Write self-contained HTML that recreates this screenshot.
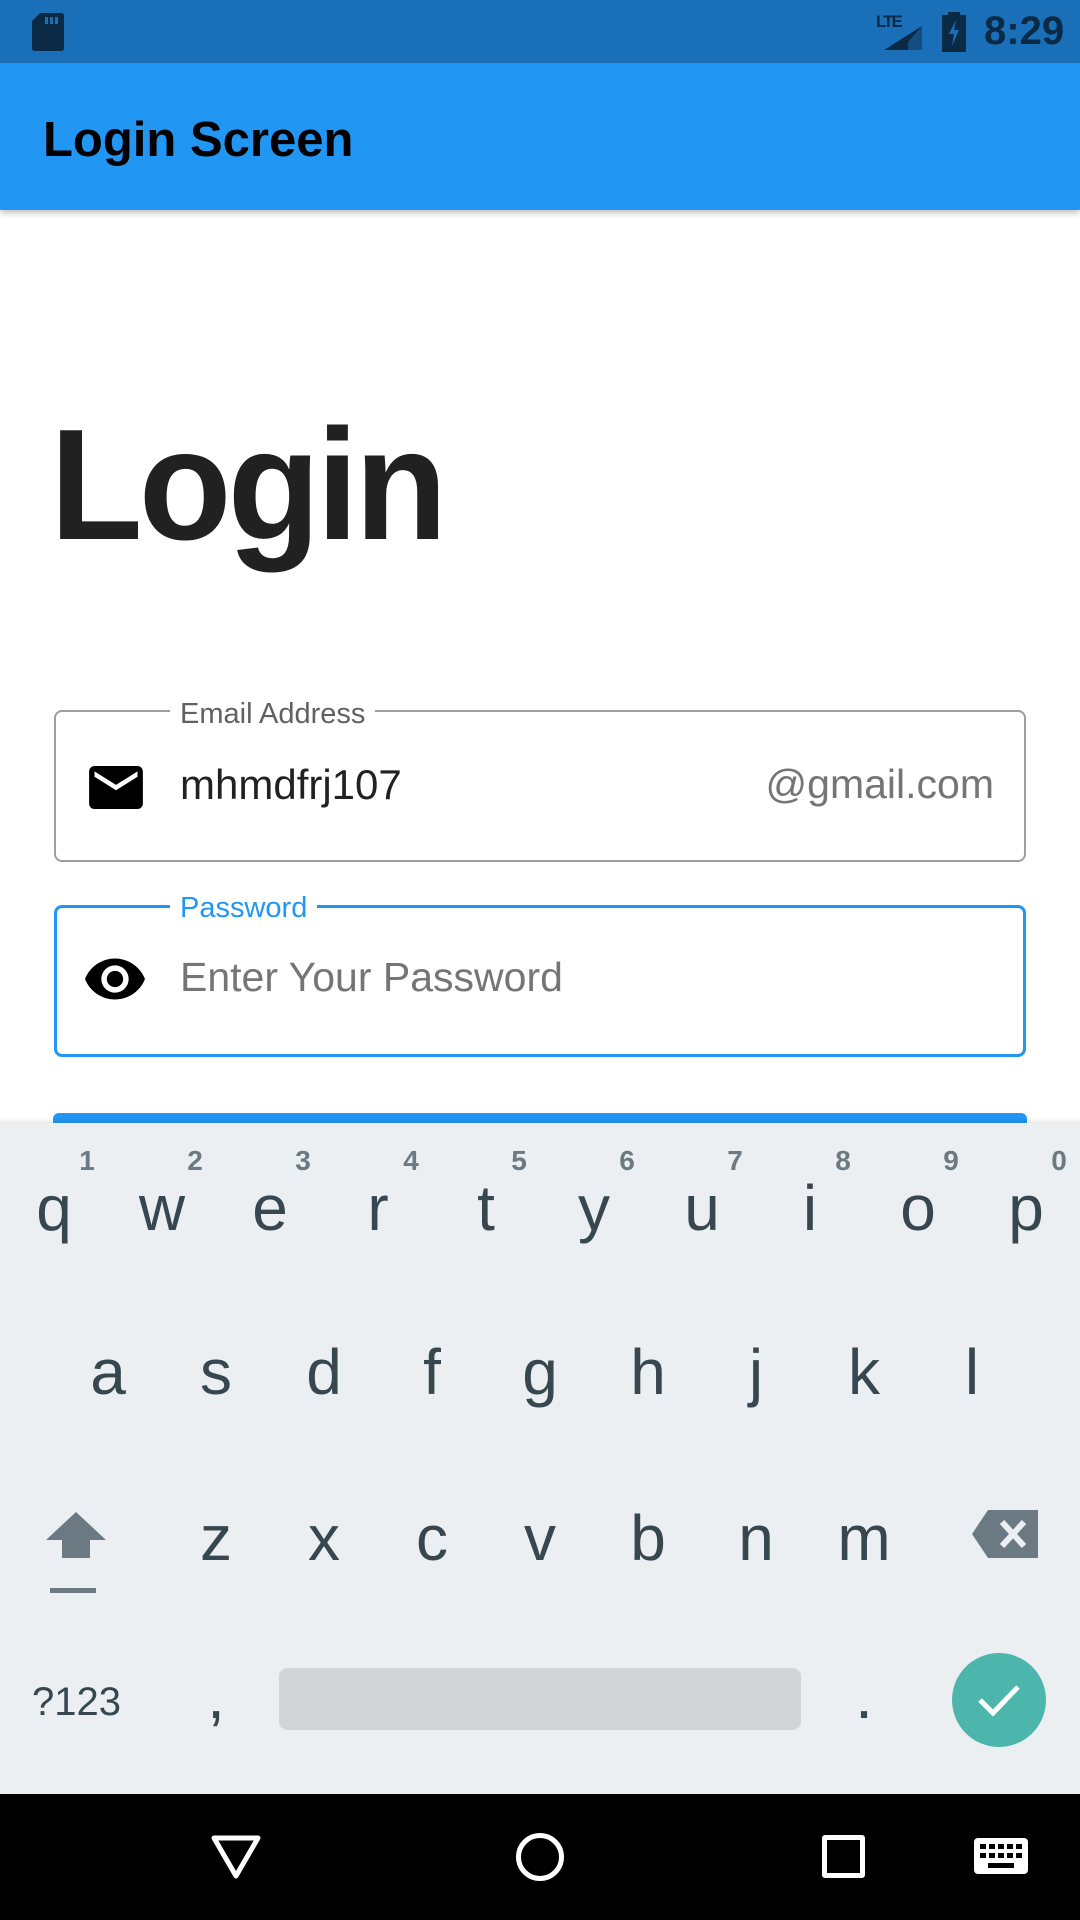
<!DOCTYPE html>
<html><head><meta charset="utf-8"><style>
*{margin:0;padding:0;box-sizing:border-box}
body{width:1080px;height:1920px;position:relative;overflow:hidden;background:#fff;font-family:"Liberation Sans",sans-serif}
.a{position:absolute}
.k{position:absolute;width:108px;text-align:center;font-size:64px;color:#37474F;line-height:1}
.n{position:absolute;width:40px;text-align:center;font-size:28px;font-weight:bold;color:#6b7a82;line-height:1}
</style></head><body>
<div class="a" style="left:0;top:0;width:1080px;height:63px;background:#1A70B8"></div>
<svg class="a" style="left:32px;top:13px" width="32" height="38" viewBox="0 0 32 38"><path d="M8 0H29Q32 0 32 3V35Q32 38 29 38H3Q0 38 0 35V8Z" fill="#0a2a45"/><rect x="13" y="4" width="3" height="7" fill="#1A70B8"/><rect x="18" y="4" width="3" height="7" fill="#1A70B8"/><rect x="23" y="4" width="3" height="7" fill="#1A70B8"/></svg>
<div class="a" style="left:876px;top:12px;font-size:17px;font-weight:bold;color:#0a2a45;letter-spacing:-2px">LTE</div>
<svg class="a" style="left:884px;top:26px" width="38" height="24"><path d="M38 0V24H0Z" fill="#0a2a45"/><path d="M38 0V24H24V16Z" fill="#164d80"/></svg>
<svg class="a" style="left:942px;top:12px" width="24" height="40"><rect x="6" y="0" width="12" height="4" fill="#0a2a45"/><rect x="0" y="3" width="24" height="37" fill="#0a2a45"/><path d="M14 8L7 22H12L10 34L17 18H12Z" fill="#1A70B8"/></svg>
<div class="a" style="left:984px;top:9px;font-size:40px;font-weight:bold;color:#0a2a45">8:29</div>
<div class="a" style="left:0;top:63px;width:1080px;height:147px;background:#2196F3;box-shadow:0 3px 6px rgba(0,0,0,.25)"></div>
<div class="a" style="left:43px;top:112px;font-size:49px;font-weight:bold;color:#000;letter-spacing:0px">Login Screen</div>
<div class="a" style="left:50px;top:406px;font-size:158px;font-weight:bold;color:#212121;letter-spacing:-4px;line-height:1;transform:scaleX(.96);transform-origin:0 0">Login</div>
<div class="a" style="left:54px;top:710px;width:972px;height:152px;border:2px solid #9e9e9e;border-radius:8px"></div>
<div class="a" style="left:170px;top:698px;background:#fff;padding:0 10px;font-size:29px;color:#616161">Email Address</div>
<svg class="a" style="left:89px;top:766px" width="54" height="43" viewBox="0 0 20 16"><path d="M18 0H2C.9 0 0 .9 0 2V14C0 15.1.9 16 2 16H18C19.1 16 20 15.1 20 14V2C20 .9 19.1 0 18 0ZM18 4L10 9L2 4V2L10 7L18 2Z" fill="#000"/></svg>
<div class="a" style="left:180px;top:761px;font-size:42px;color:#212121">mhmdfrj107</div>
<div class="a" style="right:86px;top:761px;font-size:41px;color:#757575">@gmail.com</div>
<div class="a" style="left:54px;top:905px;width:972px;height:152px;border:3px solid #2196F3;border-radius:8px"></div>
<div class="a" style="left:170px;top:892px;background:#fff;padding:0 10px;font-size:29px;color:#2196F3">Password</div>
<svg class="a" style="left:85px;top:958px" width="60" height="42" viewBox="1 4.5 22 15"><path d="M12 4.5C7 4.5 2.73 7.61 1 12c1.730 4.39 6 7.5 11 7.5s9.27-3.11 11-7.5c-1.73-4.39-6-7.5-11-7.5zM12 17c-2.76 0-5-2.240-5-5s2.24-5 5-5 5 2.24 5 5-2.24 5-5 5zm0-8c-1.66 0-3 1.34-3 3s1.34 3 3 3 3-1.34 3-3-1.34-3-3-3z" fill="#000"/></svg>
<div class="a" style="left:180px;top:954px;font-size:41px;color:#757575">Enter Your Password</div>
<div class="a" style="left:53px;top:1113px;width:974px;height:30px;background:#2196F3;border-radius:6px"></div>
<div class="a" style="left:0;top:1123px;width:1080px;height:671px;background:#ECEFF1;box-shadow:0 -2px 4px rgba(0,0,0,.1)"></div>
<div class="n" style="left:67px;top:1147px">1</div><div class="n" style="left:175px;top:1147px">2</div><div class="n" style="left:283px;top:1147px">3</div><div class="n" style="left:391px;top:1147px">4</div><div class="n" style="left:499px;top:1147px">5</div><div class="n" style="left:607px;top:1147px">6</div><div class="n" style="left:715px;top:1147px">7</div><div class="n" style="left:823px;top:1147px">8</div><div class="n" style="left:931px;top:1147px">9</div><div class="n" style="left:1039px;top:1147px">0</div>
<div class="k" style="left:0;top:1176px">q</div><div class="k" style="left:108px;top:1176px">w</div><div class="k" style="left:216px;top:1176px">e</div><div class="k" style="left:324px;top:1176px">r</div><div class="k" style="left:432px;top:1176px">t</div><div class="k" style="left:540px;top:1176px">y</div><div class="k" style="left:648px;top:1176px">u</div><div class="k" style="left:756px;top:1176px">i</div><div class="k" style="left:864px;top:1176px">o</div><div class="k" style="left:972px;top:1176px">p</div>
<div class="k" style="left:54px;top:1340px">a</div><div class="k" style="left:162px;top:1340px">s</div><div class="k" style="left:270px;top:1340px">d</div><div class="k" style="left:378px;top:1340px">f</div><div class="k" style="left:486px;top:1340px">g</div><div class="k" style="left:594px;top:1340px">h</div><div class="k" style="left:702px;top:1340px">j</div><div class="k" style="left:810px;top:1340px">k</div><div class="k" style="left:918px;top:1340px">l</div>
<svg class="a" style="left:44px;top:1510px" width="64" height="84"><path d="M32 2L62 30H46V48H18V30H2Z" fill="#6b7a82"/><rect x="6" y="78" width="46" height="5" fill="#6b7a82"/></svg>
<div class="k" style="left:162px;top:1506px">z</div><div class="k" style="left:270px;top:1506px">x</div><div class="k" style="left:378px;top:1506px">c</div><div class="k" style="left:486px;top:1506px">v</div><div class="k" style="left:594px;top:1506px">b</div><div class="k" style="left:702px;top:1506px">n</div><div class="k" style="left:810px;top:1506px">m</div>
<svg class="a" style="left:972px;top:1510px" width="66" height="48"><path d="M16 0H66V48H16L0 24Z" fill="#6b7a82"/><path d="M30 12L52 36M52 12L30 36" stroke="#ECEFF1" stroke-width="6"/></svg>
<div class="a" style="left:32px;top:1680px;font-size:40px;color:#37474F">?123</div>
<div class="k" style="left:162px;top:1664px">,</div>
<div class="a" style="left:279px;top:1668px;width:522px;height:62px;background:#D1D5D8;border-radius:8px"></div>
<div class="k" style="left:810px;top:1664px">.</div>
<div class="a" style="left:952px;top:1653px;width:94px;height:94px;border-radius:50%;background:#4DB6AC"></div>
<svg class="a" style="left:972px;top:1676px" width="54" height="48"><path d="M8 24L21 37L46 11" stroke="#fff" stroke-width="5" fill="none"/></svg>
<div class="a" style="left:0;top:1794px;width:1080px;height:126px;background:#000"></div>
<svg class="a" style="left:210px;top:1834px" width="52" height="46"><path d="M4 4H48L26 42Z" stroke="#fff" stroke-width="5" fill="none" stroke-linejoin="round"/></svg>
<div class="a" style="left:516px;top:1833px;width:48px;height:48px;border:5px solid #fff;border-radius:50%"></div>
<div class="a" style="left:822px;top:1835px;width:43px;height:43px;border:5px solid #fff;border-radius:3px"></div>
<svg class="a" style="left:974px;top:1838px" width="54" height="36"><rect width="54" height="36" rx="4" fill="#fff"/><g fill="#000"><rect x="6" y="6" width="6" height="5"/><rect x="15" y="6" width="6" height="5"/><rect x="24" y="6" width="6" height="5"/><rect x="33" y="6" width="6" height="5"/><rect x="42" y="6" width="6" height="5"/><rect x="6" y="15" width="6" height="5"/><rect x="15" y="15" width="6" height="5"/><rect x="24" y="15" width="6" height="5"/><rect x="33" y="15" width="6" height="5"/><rect x="42" y="15" width="6" height="5"/><rect x="14" y="25" width="26" height="5"/></g></svg>
</body></html>
